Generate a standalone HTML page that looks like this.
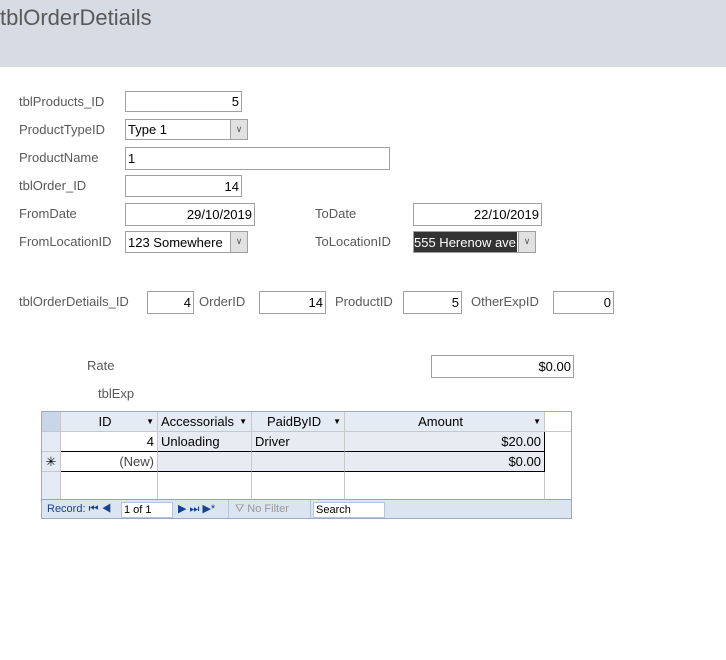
<html><head><style>
body{margin:0;width:726px;height:660px;background:#fff;position:relative;font-family:"Liberation Sans",sans-serif;overflow:hidden}
.a{position:absolute}
.l{position:absolute;font-size:13px;color:#595959}
.b{position:absolute;border:1px solid #a0a0a0;background:#fff;font-size:13px;color:#000;box-sizing:border-box;padding:0 2px;display:flex;align-items:center;white-space:nowrap;overflow:hidden}
.r{justify-content:flex-end}
.dd{position:absolute;right:0;top:0;bottom:0;width:16px;background:#e1e1e1;border-left:1px solid #a0a0a0;font-size:9px;text-align:center;color:#555;line-height:19px}
.c{position:absolute;box-sizing:border-box;font-size:13px;line-height:19px;padding:0 3px;border-right:1px solid #c8c8c8;border-bottom:1px solid #c8c8c8}
</style></head><body>
<div class="a" style="left:0;top:0;width:726px;height:67px;background:#d6dbe4"></div>
<div class="a" style="left:0;top:5px;font-size:22px;color:#595959">tblOrderDetiails</div>

<div class="l" style="left:19px;top:94px">tblProducts_ID</div><div class="b r" style="left:125px;top:91px;width:117px;height:21px">5</div>
<div class="l" style="left:19px;top:122px">ProductTypeID</div><div class="b" style="left:125px;top:119px;width:123px;height:21px">Type 1<div class="dd">&#8744;</div></div>
<div class="l" style="left:19px;top:150px">ProductName</div><div class="b" style="left:125px;top:147px;width:265px;height:23px">1</div>
<div class="l" style="left:19px;top:178px">tblOrder_ID</div><div class="b r" style="left:125px;top:175px;width:117px;height:22px">14</div>
<div class="l" style="left:19px;top:206px">FromDate</div><div class="b r" style="left:125px;top:203px;width:130px;height:23px">29/10/2019</div>
<div class="l" style="left:315px;top:206px">ToDate</div><div class="b r" style="left:413px;top:203px;width:129px;height:23px">22/10/2019</div>
<div class="l" style="left:19px;top:234px">FromLocationID</div><div class="b" style="left:125px;top:231px;width:123px;height:22px">123 Somewhere<div class="dd">&#8744;</div></div>
<div class="l" style="left:315px;top:234px">ToLocationID</div><div class="b" style="left:413px;top:231px;width:123px;height:22px;padding:0;align-items:stretch"><span style="display:flex;align-items:center;background:#333;color:#fff;width:103px;overflow:hidden">555 Herenow ave</span><div class="dd">&#8744;</div></div>

<div class="l" style="left:19px;top:294px">tblOrderDetiails_ID</div><div class="b r" style="left:147px;top:291px;width:47px;height:23px">4</div>
<div class="l" style="left:199px;top:294px">OrderID</div><div class="b r" style="left:259px;top:291px;width:67px;height:23px">14</div>
<div class="l" style="left:335px;top:294px">ProductID</div><div class="b r" style="left:403px;top:291px;width:59px;height:23px">5</div>
<div class="l" style="left:471px;top:294px">OtherExpID</div><div class="b r" style="left:553px;top:291px;width:61px;height:23px">0</div>

<div class="l" style="left:87px;top:358px">Rate</div><div class="b r" style="left:431px;top:355px;width:143px;height:23px">$0.00</div>
<div class="l" style="left:98px;top:386px">tblExp</div>

<div class="a" style="left:41px;top:411px;width:531px;height:108px;border:1px solid #9aaac4;box-sizing:border-box;background:#fff;overflow:hidden">
<div class="c" style="left:0;top:0;width:19px;height:20px;background:#c9d5e8"></div>
<div class="c" style="left:19px;top:0;width:97px;height:20px;background:#e4ebf5;text-align:center">ID<span style="float:right;font-size:8px">▼</span></div>
<div class="c" style="left:116px;top:0;width:94px;height:20px;background:#e4ebf5;white-space:nowrap;overflow:hidden">Accessorials<span style="position:absolute;right:4px;font-size:8px">▼</span></div>
<div class="c" style="left:210px;top:0;width:93px;height:20px;background:#e4ebf5;text-align:center">PaidByID<span style="float:right;font-size:8px">▼</span></div>
<div class="c" style="left:303px;top:0;width:200px;height:20px;background:#e4ebf5;text-align:center">Amount<span style="float:right;font-size:8px">▼</span></div>
<div class="c" style="left:503px;top:0;width:27px;height:20px;background:#fff"></div>
<div class="c" style="left:0;top:20px;width:19px;height:20px;background:#e4ebf5"></div>
<div class="c" style="left:19px;top:20px;width:97px;height:20px;text-align:right;border-bottom-color:#000">4</div>
<div class="c" style="left:116px;top:20px;width:94px;height:20px;background:#e8ebf2;border-bottom-color:#000">Unloading</div>
<div class="c" style="left:210px;top:20px;width:93px;height:20px;background:#e8ebf2;border-bottom-color:#000">Driver</div>
<div class="c" style="left:303px;top:20px;width:200px;height:20px;background:#e8ebf2;text-align:right;border-bottom-color:#000;border-right-color:#000">$20.00</div>
<div class="c" style="left:0;top:40px;width:19px;height:20px;background:#e4ebf5;text-align:center;padding:0">✳</div>
<div class="c" style="left:19px;top:40px;width:97px;height:20px;text-align:right;border-bottom-color:#000;color:#444">(New)</div>
<div class="c" style="left:116px;top:40px;width:94px;height:20px;background:#e8ebf2;border-bottom-color:#000"></div>
<div class="c" style="left:210px;top:40px;width:93px;height:20px;background:#e8ebf2;border-bottom-color:#000"></div>
<div class="c" style="left:303px;top:40px;width:200px;height:20px;background:#e8ebf2;text-align:right;border-bottom-color:#000;border-right-color:#000">$0.00</div>
<div class="c" style="left:0;top:60px;width:19px;height:28px;background:#e4ebf5"></div>
<div class="c" style="left:19px;top:60px;width:97px;height:28px"></div>
<div class="c" style="left:116px;top:60px;width:94px;height:28px"></div>
<div class="c" style="left:210px;top:60px;width:93px;height:28px"></div>
<div class="c" style="left:303px;top:60px;width:200px;height:28px"></div>
<div class="a" style="left:0;top:87px;width:530px;height:20px;background:#dbe4f1;border-top:1px solid #8fa6c8;font-size:11px;line-height:18px;color:#15428b">
<span class="a" style="left:5px">Record: ⏮ ◀</span>
<span class="a" style="left:79px;top:2px;width:48px;height:14px;background:#fff;border:1px solid #b5c3d8;line-height:14px;color:#000;padding-left:2px">1 of 1</span>
<span class="a" style="left:136px">▶ ⏭ ▶*</span>
<span class="a" style="left:186px;top:0;height:18px;border-left:1px solid #b5c3d8;padding-left:6px;color:#999">⛛ No Filter</span>
<span class="a" style="left:268px;top:0;height:18px;border-left:1px solid #b5c3d8"></span>
<span class="a" style="left:271px;top:2px;width:68px;height:14px;background:#fff;border:1px solid #b5c3d8;line-height:14px;color:#000;padding-left:2px">Search</span>
</div>
</div>
</body></html>
